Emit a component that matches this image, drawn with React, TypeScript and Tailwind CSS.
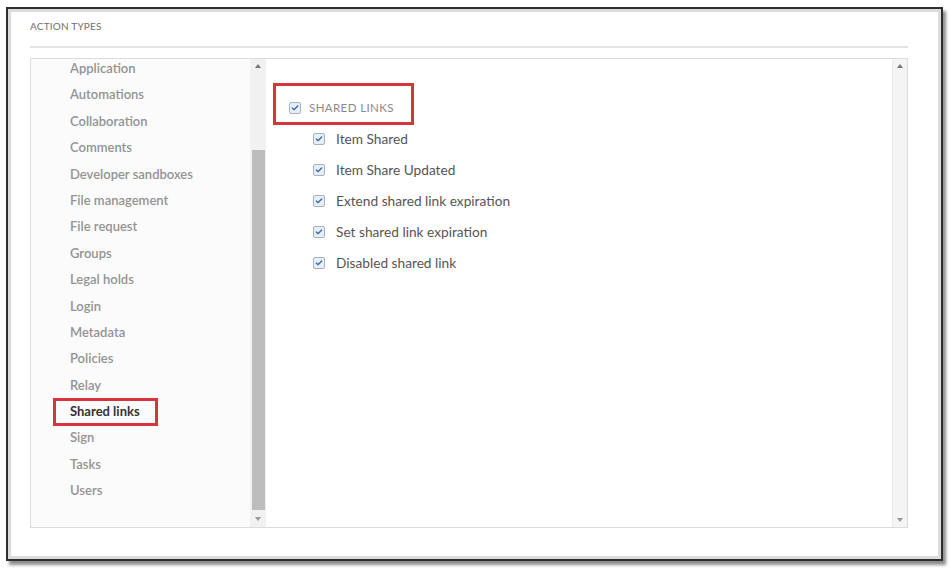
import { Check } from 'lucide-react';

const categories = [
  'Application',
  'Automations',
  'Collaboration',
  'Comments',
  'Developer sandboxes',
  'File management',
  'File request',
  'Groups',
  'Legal holds',
  'Login',
  'Metadata',
  'Policies',
  'Relay',
  'Shared links',
  'Sign',
  'Tasks',
  'Users',
];

const events = [
  'Item Shared',
  'Item Share Updated',
  'Extend shared link expiration',
  'Set shared link expiration',
  'Disabled shared link',
];

const Box = () => (
  <span className="flex items-center justify-center w-[12px] h-[12px] shrink-0 rounded-[2px] border border-[#a7b2bf] bg-[#e9eef4]">
    <Check className="w-[8px] h-[8px] text-[#2f6db3]" strokeWidth={4} />
  </span>
);

const ArrowUp = () => (
  <span className="block w-0 h-0 border-l-[3px] border-r-[3px] border-b-[4px] border-l-transparent border-r-transparent border-b-[#777]" />
);

const ArrowDown = () => (
  <span className="block w-0 h-0 border-l-[3px] border-r-[3px] border-t-[4px] border-l-transparent border-r-transparent border-t-[#999]" />
);

const App = () => {
  return (
    <div className="w-[950px] h-[568px] bg-white pt-[7px] pl-[6px] font-['Lato','Liberation_Sans',sans-serif]">
      <div className="w-[937px] h-[554px] border-2 border-[#2e2e2e] bg-white shadow-[3px_4px_3px_rgba(0,0,0,0.45)]">
        <div className="h-full border-[3px] border-[#dcdcdc] pl-[19px] pt-[7px]">
          {/* Titulo */}
          <div className="text-[10px] leading-[14px] text-[#6f6f6f] tracking-[0.2px]">ACTION TYPES</div>
          <div className="mt-[13px] w-[878px] h-[2px] bg-[#e3e3e3]" />

          {/* Caja de listas */}
          <div className="mt-[10px] w-[878px] h-[470px] border border-[#dcdcdc] flex overflow-hidden">
            {/* Categorias */}
            <div className="w-[219px] bg-[#fbfbfb] overflow-hidden">
              <ul className="-mt-[4px] pl-[39px]">
                {categories.map((c) => (
                  <li
                    key={c}
                    className={`relative h-[26.4px] leading-[26.4px] text-[13px] ${
                      c === 'Shared links' ? 'font-bold text-[#333]' : 'font-semibold text-[#939393]'
                    }`}
                  >
                    {c}
                    {c === 'Shared links' && (
                      <span className="absolute -left-[17px] top-[0px] w-[105px] h-[28px] border-[3px] border-[#d8343c]" />
                    )}
                  </li>
                ))}
              </ul>
            </div>

            {/* Scroll izquierdo */}
            <div className="w-[16px] bg-[#f1f1f1] flex flex-col items-center">
              <div className="h-[14px] flex items-center justify-center">
                <ArrowUp />
              </div>
              <div className="mt-[77px] w-[13px] h-[360px] bg-[#bdbdbd]" />
              <div className="mt-[3px] h-[12px] flex items-center justify-center">
                <ArrowDown />
              </div>
            </div>

            {/* Eventos */}
            <div className="flex-1 bg-white">
              <div className="ml-[7px] mt-[24px] w-[141px] h-[42px] border-[3px] border-[#d8343c] pl-[13px] pt-[15px]">
                <div className="flex items-center gap-[8px] h-[14px]">
                  <Box />
                  <span className="text-[11.5px] text-[#8a8a8a] tracking-[0.4px]">SHARED LINKS</span>
                </div>
              </div>
              <ul className="-mt-[1.5px] pl-[47px]">
                {events.map((e) => (
                  <li key={e} className="h-[31px] flex items-center gap-[11px] text-[13.7px] text-[#555]">
                    <Box />
                    <span>{e}</span>
                  </li>
                ))}
              </ul>
            </div>

            {/* Scroll derecho */}
            <div className="w-[15px] bg-[#f4f4f4] border-l border-[#ececec] flex flex-col items-center justify-between py-[5px]">
              <ArrowUp />
              <ArrowDown />
            </div>
          </div>
        </div>
      </div>
    </div>
  );
};

export default App;
